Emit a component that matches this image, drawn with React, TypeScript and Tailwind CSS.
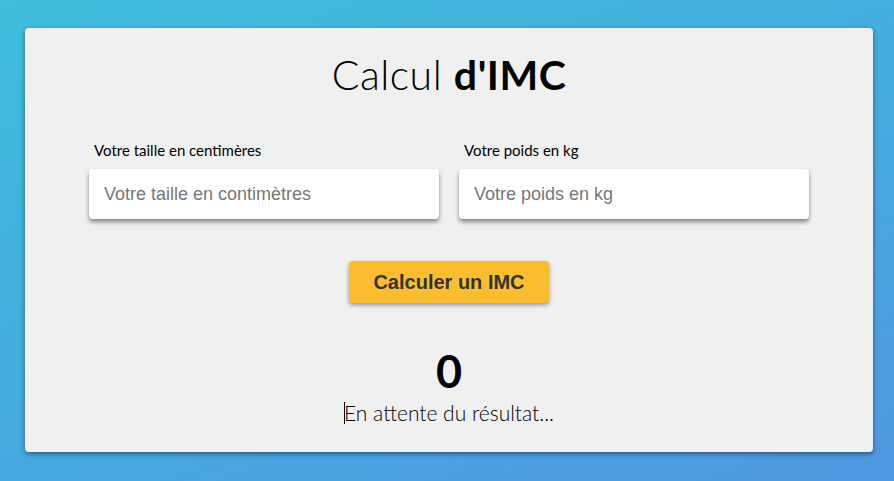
export default function App() {
  return (
    <div className="min-h-[481px] w-full bg-[linear-gradient(160deg,#3fbddc_0%,#45acdf_50%,#5097e1_100%)] pl-[25px] pt-[28px] pb-[29px]">
      <div className="w-[848px] h-[424px] bg-[#f0f0f0] rounded-[4px] shadow-[0_2px_5px_rgba(0,0,0,0.45)] flex flex-col items-center">
        <h1 className="mt-[22px] text-[41px] leading-[50px] text-black font-['Lato',sans-serif] font-light tracking-[0.5px]">
          Calcul <span className="font-bold">d'IMC</span>
        </h1>

        <div className="mt-[41px] flex gap-[20px]">
          <div className="flex flex-col w-[350px]">
            <label className="pl-[5px] text-[15px] leading-[18px] text-black font-['Lato',sans-serif]">
              Votre taille en centimères
            </label>
            <input
              placeholder="Votre taille en contimètres"
              className="mt-[10px] h-[50px] rounded-[4px] bg-white px-[15px] text-[18px] font-['Liberation_Sans',Arial,sans-serif] placeholder:text-[#777] outline-none shadow-[0_3px_4px_rgba(0,0,0,0.45)]"
            />
          </div>
          <div className="flex flex-col w-[350px]">
            <label className="pl-[5px] text-[15px] leading-[18px] text-black font-['Lato',sans-serif]">
              Votre poids en kg
            </label>
            <input
              placeholder="Votre poids en kg"
              className="mt-[10px] h-[50px] rounded-[4px] bg-white px-[15px] text-[18px] font-['Liberation_Sans',Arial,sans-serif] placeholder:text-[#777] outline-none shadow-[0_3px_4px_rgba(0,0,0,0.45)]"
            />
          </div>
        </div>

        <button className="mt-[42px] w-[200px] h-[42px] rounded-[4px] bg-[#fbbd30] text-[#333] text-[20px] font-bold font-['Liberation_Sans',Arial,sans-serif] shadow-[0_2px_4px_rgba(0,0,0,0.4)]">
          Calculer un IMC
        </button>

        <div className="mt-[42px] text-[45px] leading-[52px] font-bold text-black font-['Lato',sans-serif]">0</div>
        <p className="mt-[4px] flex items-center text-[21px] leading-[24px] text-black font-['Lato',sans-serif] font-light">
          <span className="inline-block w-px h-[22px] bg-black -mr-[1px]" />
          En attente du résultat...
        </p>
      </div>
    </div>
  );
}
